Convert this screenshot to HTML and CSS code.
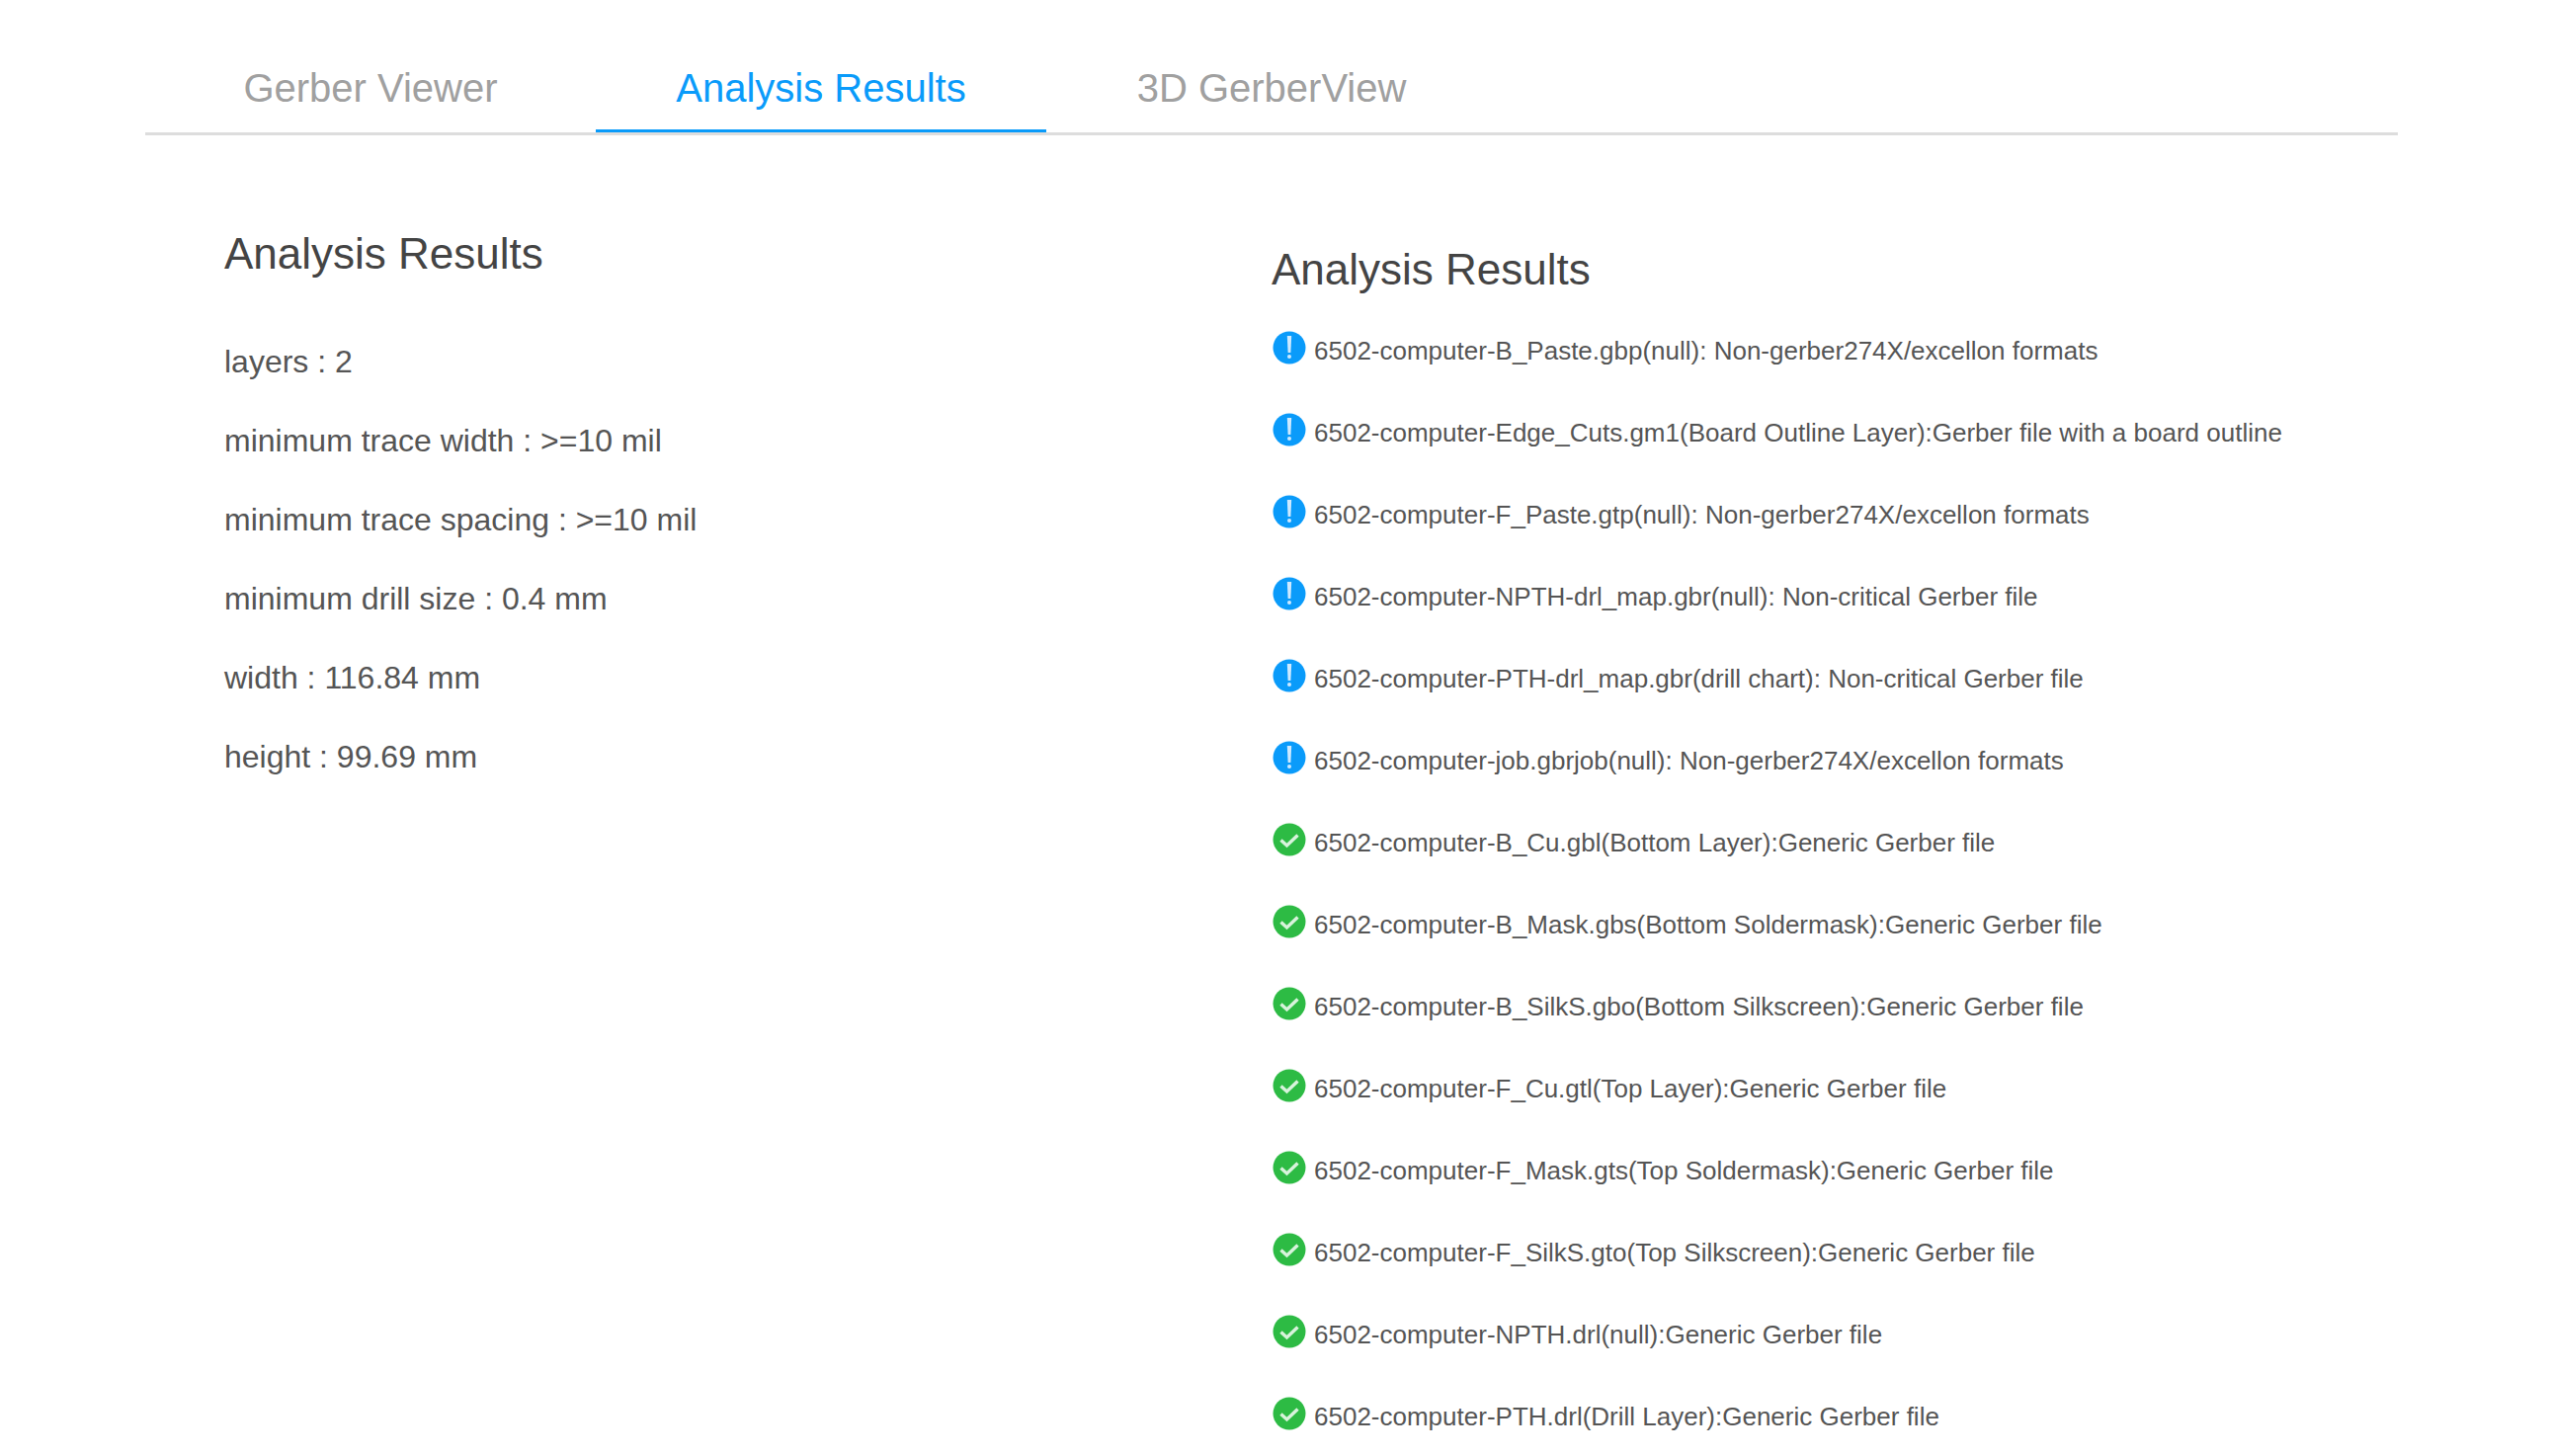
FILE: index.html
```html
<!DOCTYPE html>
<html lang="en">
<head>
    <meta charset="UTF-8">
    <meta name="viewport" content="width=device-width, initial-scale=1.0">
    <title>Analysis Results</title>
    <link rel="stylesheet" href="styles.css">
</head>
<body>
<svg class="icon-defs" width="0" height="0">
    <symbol id="icon-info" viewBox="0 0 34 34">
        <circle cx="17" cy="17" r="16.500" fill="#0a9bfa"/>
        <path d="M14.800 5h4.400l-.8 17h-2.800z" fill="#cfeaff"/>
        <circle cx="17" cy="26" r="2" fill="#cfeaff"/>
    </symbol>
    <symbol id="icon-ok" viewBox="0 0 34 34">
        <circle cx="17" cy="17" r="16.500" fill="#2dbb44"/>
        <path d="M8.500 17.500l6 5.500 11-10.500" fill="none" stroke="#d8f3dc" stroke-width="3.400"/>
    </symbol>
</svg>

<div class="tabs">
    <div class="tab tab-viewer">Gerber Viewer</div>
    <div class="tab tab-analysis active">Analysis Results</div>
    <div class="tab tab-3d">3D GerberView</div>
</div>

<div class="content">
    <div class="summary">
        <h2>Analysis Results</h2>
        <p>layers : 2</p>
        <p>minimum trace width : &gt;=10 mil</p>
        <p>minimum trace spacing : &gt;=10 mil</p>
        <p>minimum drill size : 0.4 mm</p>
        <p>width : 116.84 mm</p>
        <p>height : 99.69 mm</p>
    </div>
    <div class="files">
        <h2>Analysis Results</h2>
        <ul class="file-list">
            <li><svg class="icon"><use href="#icon-info"/></svg>6502-computer-B_Paste.gbp(null): Non-gerber274X/excellon formats</li>
            <li><svg class="icon"><use href="#icon-info"/></svg>6502-computer-Edge_Cuts.gm1(Board Outline Layer):Gerber file with a board outline</li>
            <li><svg class="icon"><use href="#icon-info"/></svg>6502-computer-F_Paste.gtp(null): Non-gerber274X/excellon formats</li>
            <li><svg class="icon"><use href="#icon-info"/></svg>6502-computer-NPTH-drl_map.gbr(null): Non-critical Gerber file</li>
            <li><svg class="icon"><use href="#icon-info"/></svg>6502-computer-PTH-drl_map.gbr(drill chart): Non-critical Gerber file</li>
            <li><svg class="icon"><use href="#icon-info"/></svg>6502-computer-job.gbrjob(null): Non-gerber274X/excellon formats</li>
            <li><svg class="icon"><use href="#icon-ok"/></svg>6502-computer-B_Cu.gbl(Bottom Layer):Generic Gerber file</li>
            <li><svg class="icon"><use href="#icon-ok"/></svg>6502-computer-B_Mask.gbs(Bottom Soldermask):Generic Gerber file</li>
            <li><svg class="icon"><use href="#icon-ok"/></svg>6502-computer-B_SilkS.gbo(Bottom Silkscreen):Generic Gerber file</li>
            <li><svg class="icon"><use href="#icon-ok"/></svg>6502-computer-F_Cu.gtl(Top Layer):Generic Gerber file</li>
            <li><svg class="icon"><use href="#icon-ok"/></svg>6502-computer-F_Mask.gts(Top Soldermask):Generic Gerber file</li>
            <li><svg class="icon"><use href="#icon-ok"/></svg>6502-computer-F_SilkS.gto(Top Silkscreen):Generic Gerber file</li>
            <li><svg class="icon"><use href="#icon-ok"/></svg>6502-computer-NPTH.drl(null):Generic Gerber file</li>
            <li><svg class="icon"><use href="#icon-ok"/></svg>6502-computer-PTH.drl(Drill Layer):Generic Gerber file</li>
        </ul>
    </div>
</div>
</body>
</html>
```

FILE: styles.css
```css
html, body {
    height: 100%;
    overflow: hidden;
}

body {
    margin: 0;
    padding: 0 155px 0 147px;
    font-family: "Liberation Sans", Arial, sans-serif;
    background-color: #fff;
    color: #555;
}

.icon-defs {
    display: block;
    height: 0;
}

.tabs {
    display: flex;
    height: 134px;
    border-bottom: 3px solid #ddd;
}

.tab {
    height: 134px;
    padding-top: 65px;
    font-size: 40px;
    line-height: 48px;
    color: #a0a0a0;
    text-align: center;
    box-sizing: border-box;
}

.tab-viewer {
    width: 456px;
}

.tab-analysis {
    width: 456px;
}

.tab-3d {
    width: 456px;
}

.active {
    color: #0a9bfa;
    border-bottom: 3px solid #0a9bfa;
}

.content {
    display: flex;
    padding-left: 80px;
}

.summary {
    width: 1060px;
    padding-top: 90px;
}

.summary h2,
.files h2 {
    margin: 0;
    font-size: 44px;
    font-weight: normal;
    line-height: 60px;
    color: #444;
}

.summary p {
    margin: 0;
    font-size: 32px;
    line-height: 80px;
}

.summary h2 {
    margin-bottom: 39px;
}

.files {
    flex: 1;
    padding-top: 106px;
}

.files h2 {
    margin-bottom: 11px;
}

.file-list {
    list-style: none;
    margin: 0;
    padding: 0;
}

.file-list li {
    display: flex;
    align-items: center;
    height: 83px;
    font-size: 26px;
    white-space: nowrap;
}

.icon {
    width: 34px;
    height: 34px;
    margin-left: 1px;
    margin-right: 8px;
    position: relative;
    top: -4px;
}
```
